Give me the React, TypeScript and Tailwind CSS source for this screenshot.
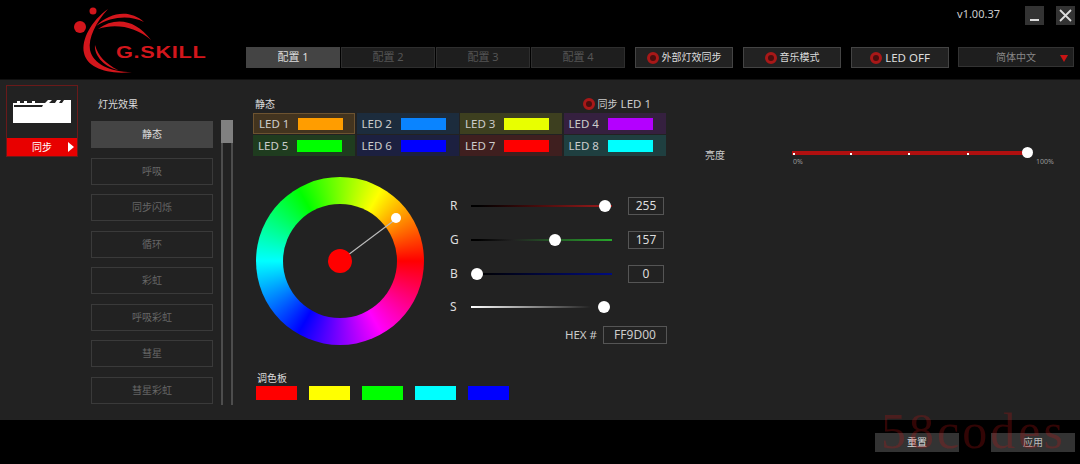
import React from "react";

const cjk = "font-['Noto_Sans','Noto_Sans_CJK_SC',sans-serif]";

const tabs = ["配置 1", "配置 2", "配置 3", "配置 4"];
const effects = ["静态", "呼吸", "同步闪烁", "循环", "彩虹", "呼吸彩虹", "彗星", "彗星彩虹"];
const leds = [
    { name: "LED 1", cell: "bg-[#43341f] border border-[#6d5330]", swatch: "bg-[#ff9d00]" },
    { name: "LED 2", cell: "bg-[#1c2c3d]", swatch: "bg-[#0a84ff]" },
    { name: "LED 3", cell: "bg-[#3d3f1f]", swatch: "bg-[#e8ff00]" },
    { name: "LED 4", cell: "bg-[#35203f]", swatch: "bg-[#b400ff]" },
    { name: "LED 5", cell: "bg-[#1f3c1f]", swatch: "bg-[#00ff00]" },
    { name: "LED 6", cell: "bg-[#1c2040]", swatch: "bg-[#0000ff]" },
    { name: "LED 7", cell: "bg-[#3f1f1f]", swatch: "bg-[#ff0000]" },
    { name: "LED 8", cell: "bg-[#1f3f40]", swatch: "bg-[#00ffff]" },
];

const Radio = () => (
    <span className="w-[12px] h-[12px] rounded-full border-[3px] border-[#a81818] bg-[#4a0e0e] shrink-0" />
);

const HeaderButton = ({ label, size }: { label: string; size: string }) => (
    <div className={`w-[98px] h-[21px] flex items-center justify-center gap-[3px] bg-[#222] border border-[#444] text-[#ddd] ${size}`}>
        <Radio />
        <span>{label}</span>
    </div>
);

const Slider = ({ label, track, thumb, value }: { label: string; track: string; thumb: string; value: string }) => (
    <div className="flex items-center h-[18px]">
        <span className="w-[21px] text-[12px] text-[#ddd]">{label}</span>
        <div className={`relative w-[141px] h-[2px] ${track}`}>
            <span className={`absolute top-[-5px] w-[12px] h-[12px] rounded-full bg-white ${thumb}`} />
        </div>
        {value && (
            <div className="ml-[16px] w-[36px] h-[18px] flex items-center justify-center border border-[#555] text-[12px] text-[#ddd]">
                {value}
            </div>
        )}
    </div>
);

const Logo = () => (
    <div className="relative w-[160px] h-[80px] shrink-0">
        <svg width="160" height="80" viewBox="0 0 160 80" fill="#d3161c">
            <circle cx="20" cy="27" r="6" />
            <circle cx="33" cy="11" r="3.5" />
            <path d="M48 9C31 21 21 40 24 53C27 67 46 75 72 72C50 72 33 64 30 50C28 38 36 22 48 9Z" />
            <path d="M36 26C50 12 70 9 84 22C70 15 52 16 36 26Z" />
            <path d="M38 29C56 16 76 20 91 40C76 27 56 23 38 29Z" />
            <path d="M35 45C34 54 42 66 58 70C46 64 38 56 35 45Z" />
        </svg>
        <span className="absolute left-[56px] top-[44px] font-['Liberation_Sans',sans-serif] font-bold text-[17px] leading-[18px] tracking-[0.5px] text-[#d3161c] scale-x-[1.28] origin-left">
            G.SKILL
        </span>
    </div>
);

const App: React.FC = () => {
    return (
        <div className={`relative w-[1080px] h-[464px] overflow-hidden bg-black flex flex-col ${cjk}`}>
            {/* Header */}
            <header className="h-[80px] shrink-0 flex pl-[60px] border-b border-[#111]">
                <Logo />
                <div className="flex-1 pl-[26px] pr-[5px] flex flex-col">
                    <div className="h-[47px] flex justify-end pt-[6px]">
                        <span className="text-[11px] leading-[16px] text-[#ccc] mr-[25px]">v1.00.37</span>
                        <div className="w-[19px] h-[19px] bg-[#333] flex items-end justify-center pb-[4px] mr-[12px]">
                            <span className="w-[9px] h-[2px] bg-[#ddd]" />
                        </div>
                        <div className="w-[19px] h-[19px] bg-[#333] flex items-center justify-center">
                            <svg width="13" height="13" viewBox="0 0 13 13" stroke="#ddd" strokeWidth="1.8">
                                <path d="M1 1L12 12M12 1L1 12" />
                            </svg>
                        </div>
                    </div>
                    <div className="flex items-start">
                        <div className="flex gap-[1px]">
                            {tabs.map((tab, i) => (
                                <div
                                    key={tab}
                                    className={
                                        i === 0
                                            ? "w-[94px] h-[21px] flex items-center justify-center bg-[#444] text-[11px] text-[#ddd]"
                                            : "w-[94px] h-[21px] flex items-center justify-center bg-[#1e1e1e] border border-[#2e2e2e] text-[11px] text-[#555]"
                                    }
                                >
                                    {tab}
                                </div>
                            ))}
                        </div>
                        <div className="ml-[10px] flex gap-[10px]">
                            <HeaderButton label="外部灯效同步" size="text-[10px]" />
                            <HeaderButton label="音乐模式" size="text-[10px]" />
                            <HeaderButton label="LED OFF" size="text-[11.5px]" />
                        </div>
                        <div className="relative ml-[9px] w-[116px] h-[20px] flex items-center justify-center bg-[#1e1e1e] border border-[#333] text-[10px] text-[#888]">
                            简体中文
                            <span className="absolute right-[5px] top-[7px] w-0 h-0 border-x-[4px] border-x-transparent border-t-[7px] border-t-[#c81414]" />
                        </div>
                    </div>
                </div>
            </header>

            {/* Main */}
            <main className="h-[340px] shrink-0 bg-[#222] flex">
                {/* Device card */}
                <div className="w-[91px] shrink-0 pl-[6px] pt-[5px]">
                    <div className="w-[72px] h-[72px] border border-[#6a1a1a] flex flex-col">
                        <div className="flex-1 flex items-center justify-center">
                            <svg width="60" height="24" viewBox="0 0 60 24" fill="#fff">
                                <path d="M1 3H5V1H8V3H12V1H15V3H20V1H23V3H33L36 0H40L37 3H43L45 0H49L47 3H50L52 0H59V23H1Z" />
                                <path d="M2 5H31L30 7H2Z" fill="#222" />
                            </svg>
                        </div>
                        <div className="relative h-[18px] bg-[#e80000] flex items-center justify-center text-[10px] text-white">
                            同步
                            <span className="absolute right-[3px] top-[4px] w-0 h-0 border-y-[5px] border-y-transparent border-l-[6px] border-l-white" />
                        </div>
                    </div>
                </div>

                {/* Effect list */}
                <div className="w-[162px] shrink-0 relative pt-[15px]">
                    <div className="pl-[7px] h-[26px] text-[10px] leading-[18px] text-[#ddd]">灯光效果</div>
                    <div className="w-[122px] flex flex-col gap-[9.5px]">
                        {effects.map((effect, i) => (
                            <div
                                key={effect}
                                className={
                                    i === 0
                                        ? "h-[27px] flex items-center justify-center bg-[#444] text-[10px] text-[#ddd]"
                                        : "h-[27px] flex items-center justify-center border border-[#3a3a3a] text-[10px] text-[#666]"
                                }
                            >
                                {effect}
                            </div>
                        ))}
                    </div>
                    {/* Scrollbar */}
                    <div className="absolute left-[130px] top-[40px] w-[12px] h-[285px] border-x-2 border-[#4d4d4d]">
                        <div className="h-[23px] -mx-[2px] bg-[#808080]" />
                    </div>
                </div>

                {/* Colour controls */}
                <div className="w-[415px] shrink-0 pt-[15px]">
                    <div className="h-[18px] flex items-center justify-between pl-[2px] pr-[17px]">
                        <span className="text-[10px] text-[#ddd]">静态</span>
                        <div className="flex items-center gap-[3px] text-[11.5px] text-[#ccc]">
                            <Radio />
                            <span className="flex items-center gap-[3px]">
                                <span className="text-[10px]">同步</span>
                                LED 1
                            </span>
                        </div>
                    </div>
                    <div className="grid grid-cols-[102px_102px_102px_102px] gap-x-[1.5px] gap-y-[1px]">
                        {leds.map((led) => (
                            <div key={led.name} className={`h-[21px] flex items-center pl-[5px] ${led.cell}`}>
                                <span className="w-[39px] text-[11.5px] text-[#ccc]">{led.name}</span>
                                <span className={`w-[45px] h-[12px] ${led.swatch}`} />
                            </div>
                        ))}
                    </div>

                    <div className="flex mt-[21px]">
                        {/* Wheel */}
                        <div className="relative w-[168px] h-[168px] ml-[3px] rounded-full flex items-center justify-center bg-[conic-gradient(from_90deg,#f00,#f0f,#00f,#0ff,#0f0,#ff0,#f00)]">
                            <div className="w-[114px] h-[114px] rounded-full bg-[#222]" />
                            <svg className="absolute inset-0" width="168" height="168" viewBox="0 0 168 168">
                                <line x1="84" y1="84" x2="140" y2="42" stroke="#bbb" strokeWidth="1.2" />
                            </svg>
                            <span className="absolute left-[72px] top-[72px] w-[24px] h-[24px] rounded-full bg-[#ff0000]" />
                            <span className="absolute left-[135px] top-[36px] w-[10px] h-[10px] rounded-full bg-white" />
                        </div>

                        {/* Sliders */}
                        <div className="ml-[26px] pt-[20px] flex flex-col gap-[16px]">
                            <Slider label="R" value="255" thumb="left-[128px]" track="bg-[linear-gradient(90deg,#000_5%,#a01c1c)]" />
                            <Slider label="G" value="157" thumb="left-[78px]" track="bg-[linear-gradient(90deg,#000_5%,#222_30%,#27a82b_100%)]" />
                            <Slider label="B" value="0" thumb="left-0" track="bg-[linear-gradient(90deg,#000_5%,#000c80)]" />
                            <div className="-mt-[1px]">
                                <Slider label="S" value="" thumb="left-[127px]" track="bg-[linear-gradient(90deg,#fff,#222_85%)]" />
                            </div>
                            <div className="flex items-center justify-end h-[18px] -mt-[6px] -mr-[3px] gap-[6px]">
                                <span className="text-[11.5px] text-[#ccc]">HEX #</span>
                                <div className="w-[64px] h-[18px] flex items-center justify-center border border-[#555] text-[12px] text-[#ccc]">
                                    FF9D00
                                </div>
                            </div>
                        </div>
                    </div>

                    {/* Palette */}
                    <div className="mt-[26px] pl-[3px]">
                        <div className="h-[14px] text-[10px] leading-[14px] text-[#ddd] pl-[1px]">调色板</div>
                        <div className="flex gap-[12px] mt-[1px]">
                            <span className="w-[41px] h-[14px] bg-[#ff0000]" />
                            <span className="w-[41px] h-[14px] bg-[#ffff00]" />
                            <span className="w-[41px] h-[14px] bg-[#00ff00]" />
                            <span className="w-[41px] h-[14px] bg-[#00ffff]" />
                            <span className="w-[41px] h-[14px] bg-[#0000ff]" />
                        </div>
                    </div>
                </div>

                {/* Brightness */}
                <div className="flex-1 flex items-start pl-[37px] pt-[65px]">
                    <span className="w-[87px] mt-[1px] text-[10px] leading-[18px] text-[#ccc]">亮度</span>
                    <div className="relative w-[235px] h-[4px] mt-[6px] bg-[#b01010]">
                        <span className="absolute left-[1px] top-[2px] w-[2px] h-[2px] bg-white" />
                        <span className="absolute left-[58px] top-[2px] w-[2px] h-[2px] bg-white" />
                        <span className="absolute left-[116px] top-[2px] w-[2px] h-[2px] bg-white" />
                        <span className="absolute left-[175px] top-[2px] w-[2px] h-[2px] bg-white" />
                        <span className="absolute left-[230px] top-[-4px] w-[11px] h-[11px] rounded-full bg-white" />
                        <span className="absolute left-[1px] top-[6px] text-[7px] leading-[9px] text-[#999]">0%</span>
                        <span className="absolute left-[244px] top-[6px] text-[7px] leading-[9px] text-[#999]">100%</span>
                    </div>
                </div>
            </main>

            {/* Footer */}
            <footer className="flex-1 flex justify-end items-start pt-[13px] pr-[5px] gap-[32px]">
                <div className="w-[84px] h-[19px] flex items-center justify-center bg-[#333] text-[10px] text-[#ddd]">重置</div>
                <div className="w-[84px] h-[19px] flex items-center justify-center bg-[#333] text-[10px] text-[#bbb]">应用</div>
            </footer>

            {/* Watermark */}
            <span className="absolute left-[881px] top-[401px] font-['Liberation_Serif',serif] text-[50px] leading-[60px] tracking-[3px] text-[#c81414]/25">
                58codes
            </span>
        </div>
    );
};

export default App;
